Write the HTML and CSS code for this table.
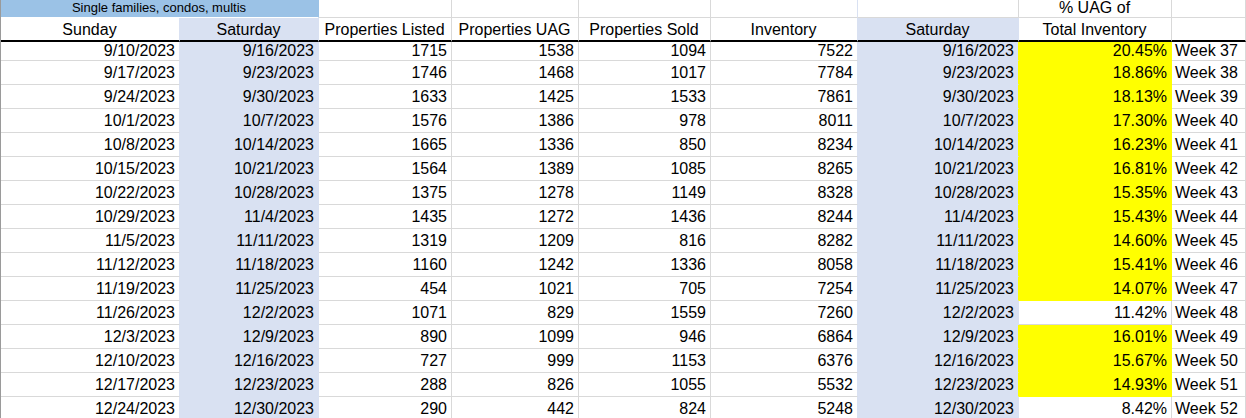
FILE: index.html
```html
<!DOCTYPE html>
<html>
<head>
<meta charset="utf-8">
<link rel="stylesheet" href="styles.css">
</head>
<body>
<table class="sheet">
  <colgroup>
    <col class="c-a"><col class="c-b"><col class="c-c"><col class="c-d"><col class="c-e"><col class="c-f"><col class="c-g"><col class="c-h"><col class="c-i">
  </colgroup>
  <tbody>
    <tr class="row-top">
      <td class="banner" colspan="2">Single families, condos, multis</td>
      <td></td><td></td><td></td><td class="pre-sat"></td><td></td><td class="ctr">% UAG of</td><td></td>
    </tr>
    <tr class="row-head">
      <td class="ctr pre-sat">Sunday</td>
      <td class="ctr sat">Saturday</td>
      <td class="ctr">Properties Listed</td>
      <td class="ctr">Properties UAG</td>
      <td class="ctr">Properties Sold</td>
      <td class="ctr pre-sat">Inventory</td>
      <td class="ctr sat">Saturday</td>
      <td class="ctr">Total Inventory</td>
      <td></td>
    </tr>
    <tr class="row-first">
      <td class="num pre-sat">9/10/2023</td><td class="num sat">9/16/2023</td><td class="num">1715</td><td class="num">1538</td><td class="num">1094</td><td class="num pre-sat">7522</td><td class="num sat pre-hi">9/16/2023</td><td class="num hi">20.45%</td><td class="wk">Week 37</td>
    </tr>
    <tr class="row">
      <td class="num pre-sat">9/17/2023</td><td class="num sat">9/23/2023</td><td class="num">1746</td><td class="num">1468</td><td class="num">1017</td><td class="num pre-sat">7784</td><td class="num sat pre-hi">9/23/2023</td><td class="num hi">18.86%</td><td class="wk">Week 38</td>
    </tr>
    <tr class="row">
      <td class="num pre-sat">9/24/2023</td><td class="num sat">9/30/2023</td><td class="num">1633</td><td class="num">1425</td><td class="num">1533</td><td class="num pre-sat">7861</td><td class="num sat pre-hi">9/30/2023</td><td class="num hi">18.13%</td><td class="wk">Week 39</td>
    </tr>
    <tr class="row">
      <td class="num pre-sat">10/1/2023</td><td class="num sat">10/7/2023</td><td class="num">1576</td><td class="num">1386</td><td class="num">978</td><td class="num pre-sat">8011</td><td class="num sat pre-hi">10/7/2023</td><td class="num hi">17.30%</td><td class="wk">Week 40</td>
    </tr>
    <tr class="row">
      <td class="num pre-sat">10/8/2023</td><td class="num sat">10/14/2023</td><td class="num">1665</td><td class="num">1336</td><td class="num">850</td><td class="num pre-sat">8234</td><td class="num sat pre-hi">10/14/2023</td><td class="num hi">16.23%</td><td class="wk">Week 41</td>
    </tr>
    <tr class="row">
      <td class="num pre-sat">10/15/2023</td><td class="num sat">10/21/2023</td><td class="num">1564</td><td class="num">1389</td><td class="num">1085</td><td class="num pre-sat">8265</td><td class="num sat pre-hi">10/21/2023</td><td class="num hi">16.81%</td><td class="wk">Week 42</td>
    </tr>
    <tr class="row">
      <td class="num pre-sat">10/22/2023</td><td class="num sat">10/28/2023</td><td class="num">1375</td><td class="num">1278</td><td class="num">1149</td><td class="num pre-sat">8328</td><td class="num sat pre-hi">10/28/2023</td><td class="num hi">15.35%</td><td class="wk">Week 43</td>
    </tr>
    <tr class="row">
      <td class="num pre-sat">10/29/2023</td><td class="num sat">11/4/2023</td><td class="num">1435</td><td class="num">1272</td><td class="num">1436</td><td class="num pre-sat">8244</td><td class="num sat pre-hi">11/4/2023</td><td class="num hi">15.43%</td><td class="wk">Week 44</td>
    </tr>
    <tr class="row">
      <td class="num pre-sat">11/5/2023</td><td class="num sat">11/11/2023</td><td class="num">1319</td><td class="num">1209</td><td class="num">816</td><td class="num pre-sat">8282</td><td class="num sat pre-hi">11/11/2023</td><td class="num hi">14.60%</td><td class="wk">Week 45</td>
    </tr>
    <tr class="row">
      <td class="num pre-sat">11/12/2023</td><td class="num sat">11/18/2023</td><td class="num">1160</td><td class="num">1242</td><td class="num">1336</td><td class="num pre-sat">8058</td><td class="num sat pre-hi">11/18/2023</td><td class="num hi">15.41%</td><td class="wk">Week 46</td>
    </tr>
    <tr class="row">
      <td class="num pre-sat">11/19/2023</td><td class="num sat">11/25/2023</td><td class="num">454</td><td class="num">1021</td><td class="num">705</td><td class="num pre-sat">7254</td><td class="num sat pre-hi">11/25/2023</td><td class="num hi">14.07%</td><td class="wk">Week 47</td>
    </tr>
    <tr class="row">
      <td class="num pre-sat">11/26/2023</td><td class="num sat">12/2/2023</td><td class="num">1071</td><td class="num">829</td><td class="num">1559</td><td class="num pre-sat">7260</td><td class="num sat">12/2/2023</td><td class="num">11.42%</td><td class="wk">Week 48</td>
    </tr>
    <tr class="row">
      <td class="num pre-sat">12/3/2023</td><td class="num sat">12/9/2023</td><td class="num">890</td><td class="num">1099</td><td class="num">946</td><td class="num pre-sat">6864</td><td class="num sat pre-hi">12/9/2023</td><td class="num hi">16.01%</td><td class="wk">Week 49</td>
    </tr>
    <tr class="row">
      <td class="num pre-sat">12/10/2023</td><td class="num sat">12/16/2023</td><td class="num">727</td><td class="num">999</td><td class="num">1153</td><td class="num pre-sat">6376</td><td class="num sat pre-hi">12/16/2023</td><td class="num hi">15.67%</td><td class="wk">Week 50</td>
    </tr>
    <tr class="row">
      <td class="num pre-sat">12/17/2023</td><td class="num sat">12/23/2023</td><td class="num">288</td><td class="num">826</td><td class="num">1055</td><td class="num pre-sat">5532</td><td class="num sat pre-hi">12/23/2023</td><td class="num hi">14.93%</td><td class="wk">Week 51</td>
    </tr>
    <tr class="row">
      <td class="num pre-sat">12/24/2023</td><td class="num sat">12/30/2023</td><td class="num">290</td><td class="num">442</td><td class="num">824</td><td class="num pre-sat">5248</td><td class="num sat">12/30/2023</td><td class="num">8.42%</td><td class="wk">Week 52</td>
    </tr>
  </tbody>
</table>
</body>
</html>
```
FILE: styles.css
```css
html, body {
  margin: 0;
  padding: 0;
  background: #ffffff;
}

body {
  width: 1246px;
  height: 418px;
  overflow: hidden;
  font-family: "Liberation Sans", Arial, sans-serif;
  color: #000000;
}

.sheet {
  table-layout: fixed;
  width: 1246px;
  border-collapse: separate;
  border-spacing: 0;
  border-left: 1px solid #9a9a9a;
  font-size: 16px;
}

.c-a { width: 179px; }
.c-b { width: 139px; }
.c-c { width: 133px; }
.c-d { width: 127px; }
.c-e { width: 132px; }
.c-f { width: 147px; }
.c-g { width: 161px; }
.c-h { width: 153px; }
.c-i { width: 74px; }

.sheet td {
  box-sizing: border-box;
  padding: 0 4px 0 3px;
  border-right: 1px solid #d9d9d9;
  border-bottom: 1px solid #d9d9d9;
  line-height: 18px;
  white-space: nowrap;
  overflow: hidden;
  vertical-align: middle;
}

.row-top td {
  height: 18px;
  line-height: 16px;
  vertical-align: top;
  overflow: visible;
}

.row-head td {
  height: 24px;
  padding-top: 1px;
  border-bottom: 2px solid #000000;
}

.row-first td {
  height: 19px;
  line-height: 17px;
  vertical-align: bottom;
  padding-bottom: 1px;
}

.row td {
  height: 24px;
}

.banner {
  background: #9bc2e6;
  text-align: center;
  font-size: 13px;
  border-right-color: #9bc2e6 !important;
  border-bottom-color: #ffffff !important;
}

.ctr { text-align: center; }
.num { text-align: right; }
.wk { text-align: left; }

.sat {
  background: #d9e1f2;
  border-right-color: #d9e1f2 !important;
}

.row-first .sat,
.row .sat {
  border-bottom-color: #d9e1f2;
}

.pre-sat { border-right-color: #d9e1f2 !important; }

.hi {
  background: #ffff00;
  border-right-color: #ffff00 !important;
  border-bottom-color: #ffff00 !important;
}

.pre-hi { border-right-color: #ffff00 !important; }
```
